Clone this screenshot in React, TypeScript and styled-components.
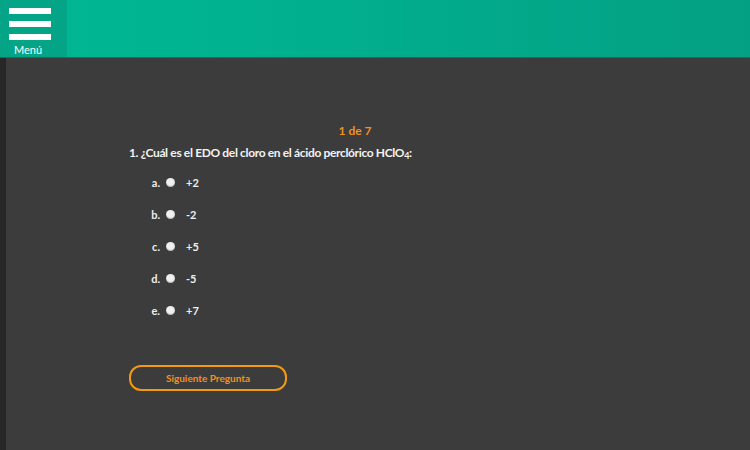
import React, { useState } from 'react';
import styled, { createGlobalStyle } from 'styled-components';

const GlobalStyle = createGlobalStyle`
  html, body {
    margin: 0;
    padding: 0;
    background: #3c3c3c;
    font-family: Lato, "Open Sans", sans-serif;
  }
`;

const Page = styled.div`
  width: 750px;
  height: 450px;
  display: flex;
  flex-direction: column;
  overflow: hidden;
  background: #3c3c3c;
`;

const Header = styled.header`
  height: 57px;
  display: flex;
  background: linear-gradient(90deg, #00b994 0%, #01ad8d 50%, #04a083 100%);
  border-bottom: 1px solid #1d6b5a;
  flex: none;
`;

const MenuButton = styled.button`
  width: 67px;
  height: 57px;
  border: none;
  padding: 8px 0 0 9px;
  background: #04a487;
  display: flex;
  flex-direction: column;
  align-items: flex-start;
  gap: 7px;
  cursor: pointer;
  color: #fff;
`;

const Bar = styled.span`
  display: block;
  width: 42px;
  height: 6px;
  background: #fff;
`;

const MenuLabel = styled.span`
  font-family: Lato, sans-serif;
  font-size: 11px;
  line-height: 9px;
  margin: -2px 0 0 5px;
`;

const Body = styled.div`
  flex: 1;
  display: flex;
`;

const SideStrip = styled.div`
  width: 6px;
  background: #272727;
  flex: none;
`;

const Main = styled.main`
  flex: 1;
  padding: 66px 0 0 123px;
`;

const Quiz = styled.section`
  width: 452px;
`;

const Counter = styled.div`
  text-align: center;
  color: #f1911c;
  font-size: 12px;
  font-weight: 700;
  line-height: 14px;
`;

const Question = styled.p`
  margin: 8px 0 0;
  color: #f2f2f2;
  font-size: 12px;
  font-weight: 700;
  line-height: 14px;
  letter-spacing: -0.35px;

  sub {
    font-size: 9px;
    vertical-align: -2px;
    line-height: 0;
  }
`;

const Options = styled.ul`
  list-style: none;
  margin: 15px 0 0;
  padding: 0;
  display: flex;
  flex-direction: column;
  gap: 18px;
`;

const Option = styled.li`
  display: flex;
  align-items: center;
  height: 14px;
  font-size: 11px;
  color: #eeeeee;
  cursor: pointer;
`;

const Letter = styled.span`
  width: 31px;
  text-align: right;
  font-weight: 700;
`;

const Radio = styled.span<{ $checked: boolean }>`
  width: 9px;
  height: 9px;
  border-radius: 50%;
  margin: 0 11px 0 6px;
  background: ${(p) => (p.$checked ? '#f1911c' : '#f0f0f0')};
  box-shadow: inset 0 -1px 1px rgba(0, 0, 0, 0.25);
`;

const Value = styled.span`
  font-weight: 700;
`;

const NextButton = styled.button`
  margin-top: 48px;
  width: 158px;
  height: 26px;
  border: 2px solid #f39a12;
  border-radius: 12px;
  background: transparent;
  color: #f1911c;
  font-family: Lato, sans-serif;
  font-size: 10px;
  font-weight: 700;
  cursor: pointer;
`;

const options = [
  { letter: 'a.', value: '+2' },
  { letter: 'b.', value: '-2' },
  { letter: 'c.', value: '+5' },
  { letter: 'd.', value: '-5' },
  { letter: 'e.', value: '+7' },
];

export default function App() {
  const [selected, setSelected] = useState<number | null>(null);

  return (
    <Page>
      <GlobalStyle />
      <Header>
        <MenuButton>
          <Bar />
          <Bar />
          <Bar />
          <MenuLabel>Menú</MenuLabel>
        </MenuButton>
      </Header>
      <Body>
        <SideStrip />
        <Main>
          <Quiz>
            <Counter>1 de 7</Counter>
            <Question>
              1. ¿Cuál es el EDO del cloro en el ácido perclórico HClO<sub>4</sub>:
            </Question>
            <Options>
              {options.map((o, i) => (
                <Option key={o.letter} onClick={() => setSelected(i)}>
                  <Letter>{o.letter}</Letter>
                  <Radio $checked={selected === i} />
                  <Value>{o.value}</Value>
                </Option>
              ))}
            </Options>
            <NextButton>Siguiente Pregunta</NextButton>
          </Quiz>
        </Main>
      </Body>
    </Page>
  );
}
